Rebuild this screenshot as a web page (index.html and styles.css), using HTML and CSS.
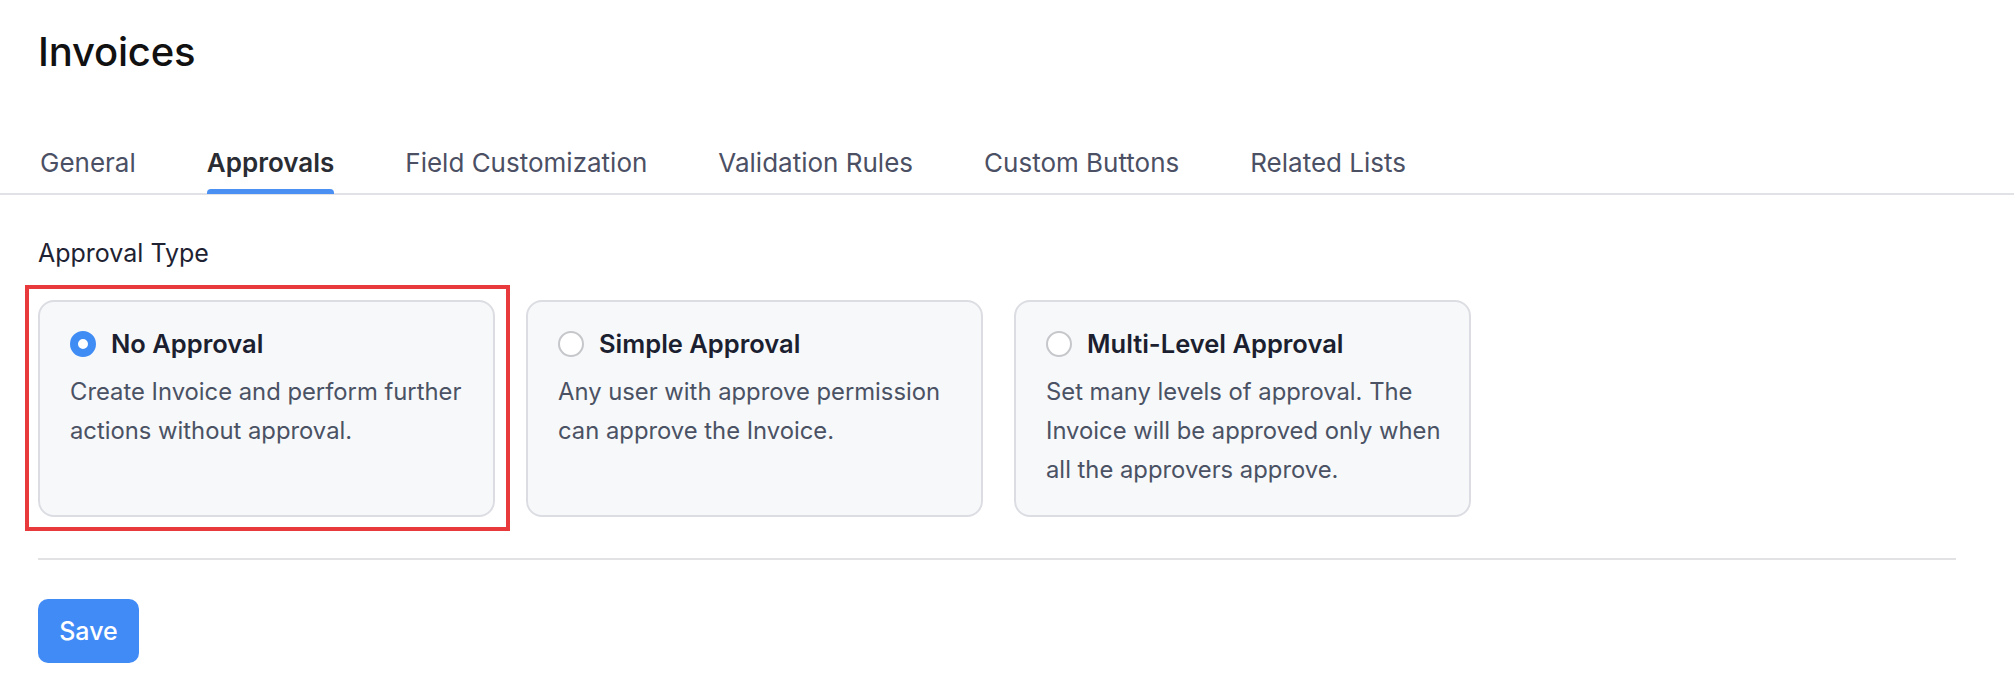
FILE: index.html
```html
<!DOCTYPE html>
<html lang="en">
<head>
<meta charset="utf-8">
<title>Invoices</title>
<link rel="stylesheet" href="styles.css">
</head>
<body>
  <header class="page-header">
    <h1 class="page-title">Invoices</h1>
  </header>
  <nav class="tabs">
    <a class="tab">General</a>
    <a class="tab tab-active">Approvals</a>
    <a class="tab">Field Customization</a>
    <a class="tab">Validation Rules</a>
    <a class="tab">Custom Buttons</a>
    <a class="tab">Related Lists</a>
  </nav>
  <main class="content">
    <h2 class="section-label">Approval Type</h2>
    <div class="cards">
      <label class="card card-highlight">
        <span class="card-head">
          <span class="radio radio-checked"></span>
          <span class="card-title">No Approval</span>
        </span>
        <span class="card-desc">Create Invoice and perform further actions without approval.</span>
        <span class="highlight-box"></span>
      </label>
      <label class="card">
        <span class="card-head">
          <span class="radio"></span>
          <span class="card-title">Simple Approval</span>
        </span>
        <span class="card-desc">Any user with approve permission can approve the Invoice.</span>
      </label>
      <label class="card">
        <span class="card-head">
          <span class="radio"></span>
          <span class="card-title">Multi-Level Approval</span>
        </span>
        <span class="card-desc">Set many levels of approval. The Invoice will be approved only when all the approvers approve.</span>
      </label>
    </div>
    <hr class="divider">
    <button class="btn-save">Save</button>
  </main>
</body>
</html>
```

FILE: styles.css
```css
* { box-sizing: border-box; }
html, body {
  margin: 0;
  padding: 0;
  background: #ffffff;
  font-family: Inter, "Noto Sans", "Liberation Sans", sans-serif;
  color: #1d2130;
}
.page-header {
  padding: 28px 38px 0 38px;
}
.page-title {
  margin: 0;
  font-size: 40px;
  line-height: 48px;
  font-weight: 500;
  color: #111111;
  letter-spacing: -0.2px;
}
.tabs {
  display: flex;
  gap: 71px;
  margin-top: 71px;
  padding: 0 38px 0 40px;
  border-bottom: 2px solid #e1e2e5;
}
.tab {
  position: relative;
  font-size: 26px;
  line-height: 31px;
  padding-bottom: 15px;
  color: #4b5064;
  cursor: pointer;
}
.tab-active {
  font-weight: 600;
  color: #2a2c33;
}
.tab-active::after {
  content: "";
  position: absolute;
  left: 0;
  right: 0;
  bottom: -1px;
  height: 5px;
  border-radius: 4px 4px 0 0;
  background: #4a8ff2;
}
.content {
  padding: 43px 58px 40px 38px;
}
.section-label {
  margin: 0;
  font-size: 25px;
  line-height: 30px;
  font-weight: 400;
  color: #1e2232;
}
.cards {
  display: flex;
  gap: 31px;
  margin-top: 32px;
}
.card {
  position: relative;
  display: flex;
  flex-direction: column;
  width: 457px;
  padding: 25px 18px 25px 30px;
  background: #f7f8fa;
  border: 2px solid #dcdde2;
  border-radius: 16px;
}
.card-head {
  display: flex;
  align-items: center;
  gap: 15px;
  height: 34px;
}
.radio {
  flex: none;
  width: 26px;
  height: 26px;
  border-radius: 50%;
  background: #ffffff;
  border: 2px solid #c6c7cb;
}
.radio-checked {
  border: 8px solid #3f8cf5;
}
.card-title {
  font-size: 25.5px;
  line-height: 34px;
  font-weight: 600;
  color: #1b1f2f;
}
.card-desc {
  margin-top: 11px;
  font-size: 23.8px;
  line-height: 39.2px;
  color: #4a5264;
}
.highlight-box {
  position: absolute;
  top: -17px;
  left: -15px;
  right: -17px;
  bottom: -16px;
  border: 4px solid #e83a3c;
  pointer-events: none;
}
.divider {
  margin: 41px 0 0 0;
  border: 0;
  border-top: 2px solid #e2e2e4;
}
.btn-save {
  display: block;
  margin-top: 39px;
  width: 101px;
  height: 64px;
  border: 0;
  border-radius: 10px;
  background: #418bf7;
  color: #ffffff;
  font-family: Inter, "Noto Sans", "Liberation Sans", sans-serif;
  font-size: 25px;
  font-weight: 500;
  cursor: pointer;
}
```
